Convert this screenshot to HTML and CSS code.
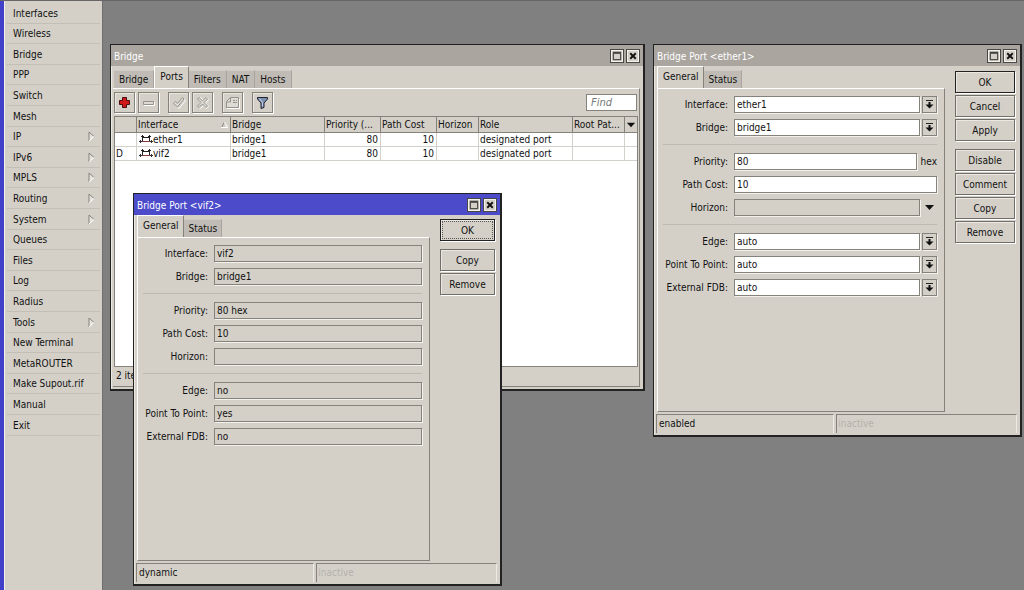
FILE: index.html
```html
<!DOCTYPE html>
<html lang="en">
<head>
<meta charset="utf-8">
<title>Bridge</title>
<link rel="stylesheet" href="styles.css">
</head>
<body>
<svg class="defs" aria-hidden="true">
  <symbol id="i-max" viewBox="0 0 13 13"><path d="M2.500 3.500h8v7h-8zM2 2.500h9" fill="none" stroke="#222"/></symbol>
  <symbol id="i-close" viewBox="0 0 13 13"><path d="M3.500 3.500l6 6M9.500 3.500l-6 6" stroke="#111" stroke-width="2"/></symbol>
  <symbol id="i-drop" viewBox="0 0 13 15"><path d="M3 3.500h7" stroke="#222"/><path d="M5.500 5h2v2.500h3L6.500 11.500 2.500 7.500h3z" fill="#111"/></symbol>
  <symbol id="i-down" viewBox="0 0 13 15"><path d="M2 5h9l-4.500 5z" fill="#111"/></symbol>
  <symbol id="i-sub" viewBox="0 0 7 11"><path d="M1 10V1l5 4.500z" fill="#e6e3dc"/><path d="M1 10V1l5 4.500" fill="none" stroke="#85827c"/><path d="M6 5.500L1 10" stroke="#fff"/></symbol>
  <symbol id="i-iface" viewBox="0 0 14 11"><path d="M3.500 1v7M10.500 1v7M4 3.500h6M2 2.500h3M9 2.500h3" fill="none" stroke="#222"/><path d="M0 7.500h3M11 7.500h3M1.500 6v3M12.500 6v3" fill="none" stroke="#333"/><path d="M3 7.500h8" stroke="#8a3a3a"/></symbol>
</svg>
<div class="app">
  <nav class="menu">
    <ul class="menu-list">
      <li><a href="#">Interfaces</a></li>
      <li><a href="#">Wireless</a></li>
      <li><a href="#">Bridge</a></li>
      <li><a href="#">PPP</a></li>
      <li><a href="#">Switch</a></li>
      <li><a href="#">Mesh</a></li>
      <li><a href="#">IP<svg class="sub"><use href="#i-sub"/></svg></a></li>
      <li><a href="#">IPv6<svg class="sub"><use href="#i-sub"/></svg></a></li>
      <li><a href="#">MPLS<svg class="sub"><use href="#i-sub"/></svg></a></li>
      <li><a href="#">Routing<svg class="sub"><use href="#i-sub"/></svg></a></li>
      <li><a href="#">System<svg class="sub"><use href="#i-sub"/></svg></a></li>
      <li><a href="#">Queues</a></li>
      <li><a href="#">Files</a></li>
      <li><a href="#">Log</a></li>
      <li><a href="#">Radius</a></li>
      <li><a href="#">Tools<svg class="sub"><use href="#i-sub"/></svg></a></li>
      <li><a href="#">New Terminal</a></li>
      <li><a href="#">MetaROUTER</a></li>
      <li><a href="#">Make Supout.rif</a></li>
      <li><a href="#">Manual</a></li>
      <li><a href="#">Exit</a></li>
    </ul>
  </nav>
  <main class="desktop">

    <section class="window win-bridge">
      <header class="titlebar">
        <h2>Bridge</h2>
        <button class="winbtn" aria-label="Maximize"><svg><use href="#i-max"/></svg></button>
        <button class="winbtn" aria-label="Close"><svg><use href="#i-close"/></svg></button>
      </header>
      <div class="tabs">
        <button class="tab">Bridge</button><button class="tab active">Ports</button><button class="tab">Filters</button><button class="tab">NAT</button><button class="tab">Hosts</button>
      </div>
      <div class="list-panel">
        <div class="toolbar">
          <button class="tool" aria-label="Add"><svg viewBox="0 0 19 19"><path d="M7.500 4.500h4v3h3v4h-3v3h-4v-3h-3v-4h3z" fill="#d01818" stroke="#4a0c0c"/></svg></button>
          <button class="tool" aria-label="Remove"><svg viewBox="0 0 19 19"><path d="M4.500 8.500h10v3h-10z" fill="#dedbd4" stroke="#96938d"/><path d="M5 12.500h10.500V9" fill="none" stroke="#fff"/></svg></button>
          <button class="tool gap" aria-label="Enable"><svg viewBox="0 0 19 19"><path d="M5 11l2-2 2 2 5-6 1.500 1.500-6.500 8z" transform="translate(1 1)" fill="none" stroke="#fff"/><path d="M4.500 10.500l2-2 2 2 5-6 1.500 1.500-6.500 8z" fill="#dedbd4" stroke="#96938d"/></svg></button>
          <button class="tool" aria-label="Disable"><svg viewBox="0 0 19 19"><path d="M5.500 6.500l2-2 3 3 3-3 2 2-3 3.500 3 3.500-2 2-3-3-3 3-2-2 3-3.500z" fill="none" stroke="#fff"/><path d="M4.500 6l1.500-1.500 3.500 3.500 3.500-3.500L14.500 6 11 9.500l3.500 3.500-1.500 1.500L9.500 11 6 14.500 4.500 13 8 9.500z" fill="#dedbd4" stroke="#96938d"/></svg></button>
          <button class="tool gap" aria-label="Comment"><svg viewBox="0 0 19 19"><path d="M4 15.500h12.500V6" fill="none" stroke="#fff"/><path d="M7.500 4.500h8v10h-12v-6zM7.500 5v4H4" fill="#dedbd4" stroke="#96938d"/><path d="M10 7.500h2M13 7.500h1M10 9.500h4" fill="none" stroke="#96938d"/></svg></button>
          <button class="tool gap" aria-label="Filter"><svg viewBox="0 0 19 19"><path d="M4.500 4.500h10V6l-3.500 4v4.500l-3 1V10L4.500 6z" fill="#7e90b0" stroke="#1c2230"/><path d="M6.500 5.500l3 4v4" fill="none" stroke="#c9d5e8"/></svg></button>
          <input class="find" type="text" placeholder="Find" aria-label="Find">
        </div>
        <div class="list">
          <table>
            <colgroup><col class="c-flag"><col class="c-name"><col class="c-bridge"><col class="c-num"><col class="c-num"><col class="c-hor"><col class="c-role"><col><col class="c-menu"></colgroup>
            <thead><tr>
              <th></th>
              <th><span class="sorted">Interface<svg class="sort" viewBox="0 0 7 7"><path d="M.5 6.500L3.500 1" stroke="#85827c"/><path d="M3.500 1l3 5.500H0" fill="none" stroke="#fff"/></svg></span></th>
              <th>Bridge</th><th>Priority (...</th><th>Path Cost</th><th>Horizon</th><th>Role</th><th>Root Pat...</th>
              <th class="cols"><button class="colbtn" aria-label="Columns"><svg><use href="#i-down"/></svg></button></th>
            </tr></thead>
            <tbody>
              <tr><td></td><td><span class="iface"><svg><use href="#i-iface"/></svg>ether1</span></td><td>bridge1</td><td class="num">80</td><td class="num">10</td><td></td><td>designated port</td><td></td><td></td></tr>
              <tr><td>D</td><td><span class="iface"><svg><use href="#i-iface"/></svg>vif2</span></td><td>bridge1</td><td class="num">80</td><td class="num">10</td><td></td><td>designated port</td><td></td><td></td></tr>
            </tbody>
          </table>
        </div>
        <footer class="count">2 items</footer>
      </div>
    </section>

    <section class="window win-ether">
      <header class="titlebar">
        <h2>Bridge Port &lt;ether1&gt;</h2>
        <button class="winbtn" aria-label="Maximize"><svg><use href="#i-max"/></svg></button>
        <button class="winbtn" aria-label="Close"><svg><use href="#i-close"/></svg></button>
      </header>
      <div class="body">
        <div class="pane">
          <div class="tabs"><button class="tab active">General</button><button class="tab">Status</button></div>
          <form class="form">
            <div class="row"><label for="e-if">Interface:</label><select id="e-if"><option>ether1</option></select><button type="button" class="drop" aria-label="Choose interface"><svg><use href="#i-drop"/></svg></button></div>
            <div class="row"><label for="e-br">Bridge:</label><select id="e-br"><option>bridge1</option></select><button type="button" class="drop" aria-label="Choose bridge"><svg><use href="#i-drop"/></svg></button></div>
            <hr>
            <div class="row"><label for="e-pr">Priority:</label><input id="e-pr" type="text" value="80"><span class="unit">hex</span></div>
            <div class="row"><label for="e-pc">Path Cost:</label><input id="e-pc" type="text" value="10"></div>
            <div class="row"><label for="e-ho">Horizon:</label><input id="e-ho" class="flat" type="text"><button type="button" class="drop plain" aria-label="Set horizon"><svg><use href="#i-down"/></svg></button></div>
            <hr>
            <div class="row"><label for="e-ed">Edge:</label><select id="e-ed"><option>auto</option></select><button type="button" class="drop" aria-label="Choose edge"><svg><use href="#i-drop"/></svg></button></div>
            <div class="row"><label for="e-pp">Point To Point:</label><select id="e-pp"><option>auto</option></select><button type="button" class="drop" aria-label="Choose point to point"><svg><use href="#i-drop"/></svg></button></div>
            <div class="row"><label for="e-fd">External FDB:</label><select id="e-fd"><option>auto</option></select><button type="button" class="drop" aria-label="Choose external FDB"><svg><use href="#i-drop"/></svg></button></div>
          </form>
        </div>
        <div class="actions">
          <button class="btn default">OK</button>
          <button class="btn">Cancel</button>
          <button class="btn">Apply</button>
          <button class="btn apart">Disable</button>
          <button class="btn">Comment</button>
          <button class="btn">Copy</button>
          <button class="btn">Remove</button>
        </div>
      </div>
      <footer class="status"><span>enabled</span><span class="off">inactive</span></footer>
    </section>

    <section class="window win-vif focused">
      <header class="titlebar">
        <h2>Bridge Port &lt;vif2&gt;</h2>
        <button class="winbtn" aria-label="Maximize"><svg><use href="#i-max"/></svg></button>
        <button class="winbtn" aria-label="Close"><svg><use href="#i-close"/></svg></button>
      </header>
      <div class="body">
        <div class="pane">
          <div class="tabs"><button class="tab active">General</button><button class="tab">Status</button></div>
          <form class="form">
            <div class="row"><label for="v-if">Interface:</label><input id="v-if" class="flat" type="text" value="vif2" readonly></div>
            <div class="row"><label for="v-br">Bridge:</label><input id="v-br" class="flat" type="text" value="bridge1" readonly></div>
            <hr>
            <div class="row"><label for="v-pr">Priority:</label><input id="v-pr" class="flat" type="text" value="80 hex" readonly></div>
            <div class="row"><label for="v-pc">Path Cost:</label><input id="v-pc" class="flat" type="text" value="10" readonly></div>
            <div class="row"><label for="v-ho">Horizon:</label><input id="v-ho" class="flat" type="text" readonly></div>
            <hr>
            <div class="row"><label for="v-ed">Edge:</label><input id="v-ed" class="flat" type="text" value="no" readonly></div>
            <div class="row"><label for="v-pp">Point To Point:</label><input id="v-pp" class="flat" type="text" value="yes" readonly></div>
            <div class="row"><label for="v-fd">External FDB:</label><input id="v-fd" class="flat" type="text" value="no" readonly></div>
          </form>
        </div>
        <div class="actions">
          <button class="btn default dotted">OK</button>
          <button class="btn apart">Copy</button>
          <button class="btn">Remove</button>
        </div>
      </div>
      <footer class="status"><span>dynamic</span><span class="off">inactive</span></footer>
    </section>
  </main>
</div>
</body>
</html>
```
FILE: styles.css
```css
* { box-sizing: border-box; }
:root {
  --face: #d4d0c8;
  --tab: #c0bcb5;
  --line: #85827c;
  --text: #111;
}
body { margin: 0; background: #808080; }
body, button, input, select {
  font-family: "DejaVu Sans Condensed", "DejaVu Sans", sans-serif;
  font-size: 10px;
  color: var(--text);
}
button, input, select { margin: 0; padding: 0; border-radius: 0; outline: none; }
svg { display: block; flex: none; }
.defs { position: absolute; width: 0; height: 0; }
.app { display: flex; min-height: 100vh; border-top: 1px solid #666; }

/* Main menu */
.menu {
  flex: none;
  width: 103px;
  background: var(--face);
  border-left: 4px solid #4040c8;
  border-right: 1px solid #6e6e6e;
  box-shadow: inset 1px 0 0 #f2f0ea;
}
.menu-list { list-style: none; margin: 0; padding: 2px 2px 0 3px; }
.menu-list li { height: 21px; border-bottom: 1px solid #c3bfb7; }
.menu-list li:nth-child(5n+2), .menu-list li:nth-child(5n+4) { height: 20px; }
.menu-list a {
  display: flex;
  align-items: center;
  justify-content: space-between;
  height: 100%;
  padding: 0 5px 0 6px;
  color: inherit;
  text-decoration: none;
  white-space: nowrap;
}
.sub { width: 7px; height: 11px; }

/* Windows */
.desktop { position: relative; flex: 1; overflow: hidden; }
.window {
  position: absolute;
  display: flex;
  flex-direction: column;
  background: var(--face);
  border: 1px solid #222;
  border-right-width: 2px;
  border-bottom-width: 2px;
  box-shadow: inset 1px 1px 0 #eceae4;
}
.win-bridge { left: 7px; top: 43px; width: 535px; height: 347px; }
.win-ether { right: 2px; top: 43px; width: 369px; height: 393px; }
.win-vif { left: 30px; top: 192px; width: 369px; height: 393px; }
.titlebar {
  display: flex;
  align-items: center;
  gap: 2px;
  height: 21px;
  flex: none;
  padding: 0 3px;
  background: #aaa69f;
  color: #fff;
}
.focused .titlebar { background: #4c4ccb; }
.titlebar h2 { flex: 1; margin: 0; padding-top: 2px; font-size: 10px; font-weight: normal; }
.winbtn {
  width: 14px;
  height: 14px;
  background: var(--face);
  border: 1px solid #4a4844;
  box-shadow: inset 0 0 0 1px #f4f2ed;
}
.winbtn svg { width: 12px; height: 12px; }

.tabs { display: flex; align-items: flex-end; height: 22px; flex: none; }
.tab {
  height: 18px;
  padding: 0 4px;
  background: var(--tab);
  border: 0;
  border-right: 1px solid #a9a59e;
  border-top: 1px solid #cfcbc3;
}
.tab.active {
  height: 22px;
  padding: 0 5px 2px;
  background: var(--face);
  border-top-color: #fff;
  border-left: 1px solid #fff;
  border-right-color: var(--line);
}
.win-bridge .tabs { padding-left: 3px; }
.win-bridge .tab { padding-left: 5px; padding-right: 5px; }

/* Port list */
.list-panel {
  flex: 1;
  display: flex;
  flex-direction: column;
  margin: 0 3px 2px 2px;
  padding: 3px 1px 0;
  border-top: 1px solid #fff;
  border-right: 1px solid var(--line);
  border-bottom: 1px solid var(--line);
}
.toolbar { display: flex; align-items: center; gap: 3px; padding: 0 1px 3px 0; }
.tool {
  width: 21px;
  height: 21px;
  background: var(--face);
  border: 1px solid var(--line);
  box-shadow: 1px 1px 0 #fff, inset 1px 1px 0 #e9e6df;
}
.tool svg { width: 19px; height: 19px; }
.tool.gap { margin-left: 6px; }
.find {
  width: 51px;
  height: 17px;
  margin-left: auto;
  padding: 0 4px;
  border: 1px solid var(--line);
  background: #fff;
}
.find::placeholder { color: #777; font-size: 11px; font-style: italic; opacity: 1; }
.list { flex: 1; background: #fff; border: 1px solid var(--line); }
table { width: 100%; table-layout: fixed; border-collapse: separate; border-spacing: 0; }
.c-flag { width: 22px; }
.c-name, .c-bridge, .c-role { width: 94px; }
.c-num { width: 56px; }
.c-hor { width: 42px; }
.c-menu { width: 12px; }
th, td { padding: 0 2px 0 1px; overflow: hidden; white-space: nowrap; text-align: left; font-weight: normal; }
th {
  height: 16px;
  background: var(--face);
  border-right: 1px solid var(--line);
  border-bottom: 1px solid var(--line);
}
td { height: 14px; line-height: 13px; border-right: 1px solid #d2d0cb; border-bottom: 1px solid #d2d0cb; }
th:last-child, td:last-child { border-right: 0; }
th.cols { padding: 0; }
.num { text-align: right; }
.sorted { display: flex; align-items: center; justify-content: space-between; }
.sort { width: 7px; height: 7px; }
.iface { display: flex; align-items: center; padding-left: 1px; }
.iface svg { width: 14px; height: 11px; }
.colbtn { display: block; border: 0; background: none; }
.colbtn svg { width: 12px; height: 14px; }
.count { height: 19px; padding: 3px 2px; white-space: nowrap; }

/* Port dialogs */
.body { display: flex; flex: 1; padding-left: 3px; }
.pane { flex: 1; display: flex; flex-direction: column; }
.form {
  flex: 1;
  padding: 7px 7px 0 5px;
  border: 1px solid #fff;
  border-right: 1px solid var(--line);
  border-bottom: 1px solid var(--line);
}
.row { display: flex; align-items: center; height: 17px; margin-bottom: 6px; }
.row label { width: 65px; margin-right: 6px; text-align: right; white-space: nowrap; }
.row input, .row select {
  flex: 1;
  min-width: 0;
  height: 17px;
  padding: 0 2px;
  background: #fff;
  border: 1px solid var(--line);
  box-shadow: 1px 1px 0 #f4f2ed;
  appearance: none;
}
.row .flat { background: var(--face); }
.unit { margin-left: 4px; }
.drop {
  width: 15px;
  height: 17px;
  margin-left: 2px;
  background: var(--face);
  border: 1px solid var(--line);
  box-shadow: 1px 1px 0 #f4f2ed;
}
.drop svg { width: 13px; height: 15px; }
.drop.plain { border-color: transparent; box-shadow: none; background: none; }
.form hr { height: 1px; margin: 8px 0; border: 0; background: #bdb9b1; }
.actions { display: flex; flex-direction: column; gap: 2px; width: 75px; padding: 5px 5px 0 10px; }
.win-vif .actions { width: 70px; padding-top: 4px; }
.btn {
  height: 22px;
  background: var(--face);
  border: 1px solid #716e69;
  box-shadow: 1px 1px 0 #fff, inset 1px 1px 0 #ebe8e2;
}
.btn.apart { margin-top: 6px; }
.btn.default { border-color: #222; }
.btn.dotted { outline: 1px dotted #555; outline-offset: -3px; }
.status { display: flex; gap: 2px; height: 19px; margin: 2px 3px 2px 2px; flex: none; }
.status span { flex: 1; padding: 3px 2px; border-top: 1px solid var(--line); border-left: 1px solid var(--line); border-right: 1px solid #eceae4; }
.status .off { flex-grow: 1.02; color: #b5b1aa; padding-left: 1px; }
```
